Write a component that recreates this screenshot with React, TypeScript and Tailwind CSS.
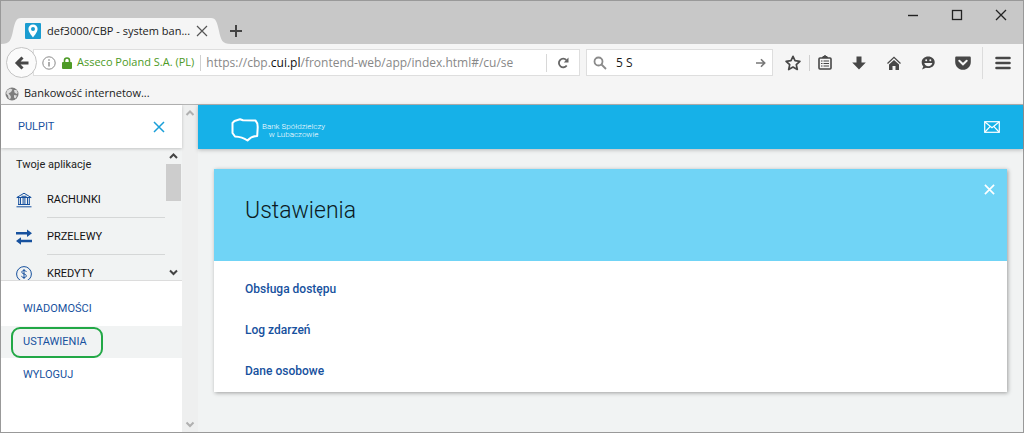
import React from 'react';

const chromeFont = "font-['Open_Sans','Noto_Sans',sans-serif]";

// --- Toolbar button ---
const ToolButton: React.FC<{ label: string; className?: string; children: React.ReactNode }> = ({ label, className = '', children }) => (
  <button aria-label={label} className={`flex h-7 shrink-0 items-center justify-center text-[#474747] ${className}`}>
    {children}
  </button>
);

// --- Scroll arrows ---
const Chevron: React.FC<{ up?: boolean; className?: string }> = ({ up, className = '' }) => (
  <svg className={`h-4 w-full shrink-0 ${className}`} viewBox="0 0 16 16" fill="none" stroke="currentColor" strokeWidth="2">
    {up ? <path d="M4.5 10 8 6.5 11.5 10" /> : <path d="M4.5 6.5 8 10l3.5-3.5" />}
  </svg>
);

const Cross: React.FC<{ className?: string; width?: number }> = ({ className = '', width = 1.5 }) => (
  <svg className={className} viewBox="0 0 12 12" fill="none" stroke="currentColor" strokeWidth={width}>
    <path d="M1 1l10 10M11 1L1 11" />
  </svg>
);

// --- Title bar with the tab ---
const TitleBar = () => (
  <div className="flex h-[43px] items-start justify-between bg-[#c8c8c8]">
    <div className="flex h-[43px] items-end">
      <svg className="h-[26px] w-5 shrink-0 text-[#f5f5f5]" viewBox="0 0 20 26" fill="currentColor">
        <path d="M0 26c9 0 10-4 12-13S15 0 20 0v26z" />
      </svg>
      <div className="flex h-[26px] w-[190px] items-center bg-[#f5f5f5] pl-1">
        <svg className="h-4 w-4 shrink-0" viewBox="0 0 16 16">
          <rect width="16" height="16" rx="1" fill="#1b9cd0" />
          <path d="M8 1.5a4.6 4.6 0 0 0-4.6 4.6C3.4 9.3 8 14.5 8 14.5s4.6-5.2 4.6-8.4A4.6 4.6 0 0 0 8 1.5z" fill="#fff" />
          <circle cx="8" cy="6" r="2" fill="#1b9cd0" />
        </svg>
        <span className="ml-[6px] flex-1 whitespace-nowrap text-[11px] text-[#1a1a1a]">def3000/CBP - system ban...</span>
        <button aria-label="Close tab" className="mr-[3px] text-[#555]">
          <Cross className="h-3 w-3" width={1.2} />
        </button>
      </div>
      <svg className="h-[26px] w-5 shrink-0 text-[#f5f5f5]" viewBox="0 0 20 26" fill="currentColor">
        <path d="M20 26c-9 0-10-4-12-13S5 0 0 0v26z" />
      </svg>
      <button aria-label="New tab" className="mb-[7px] -ml-px text-[#444]">
        <svg className="h-3 w-3" viewBox="0 0 12 12" stroke="currentColor" strokeWidth="2">
          <path d="M6 0v12M0 6h12" />
        </svg>
      </button>
    </div>
    <div className="flex h-7 items-center text-[#222]">
      <button aria-label="Minimize" className="flex w-11 justify-center">
        <svg className="h-3 w-3" viewBox="0 0 12 12" stroke="currentColor" strokeWidth="1.4"><path d="M1 6.5h10" /></svg>
      </button>
      <button aria-label="Maximize" className="flex w-11 justify-center">
        <svg className="h-3 w-3" viewBox="0 0 12 12" fill="none" stroke="currentColor" strokeWidth="1.3"><rect x="1.5" y="1.5" width="9" height="9" /></svg>
      </button>
      <button aria-label="Close window" className="flex w-11 justify-center">
        <Cross className="h-3 w-3" width={1.3} />
      </button>
    </div>
  </div>
);

// --- Navigation toolbar ---
const Toolbar = () => (
  <div className="flex h-[37px] items-center bg-[#f5f5f5] pr-1">
    <button aria-label="Back" className="z-10 ml-[5px] flex h-[31px] w-[31px] shrink-0 items-center justify-center rounded-full border border-[#c4c4c4] bg-[#fbfbfb] text-[#474747]">
      <svg className="h-4 w-4" viewBox="0 0 16 16" fill="none" stroke="currentColor" strokeWidth="3">
        <path d="M8.5 2.5 3 8l5.5 5.5M3 8h11.5" />
      </svg>
    </button>
    <div className="-ml-1 flex h-[27px] min-w-0 flex-1 items-center border border-[#dedede] bg-white pl-2">
      <svg className="h-[14px] w-[14px] shrink-0" viewBox="0 0 14 14" fill="none" stroke="#8a8a8a">
        <circle cx="7" cy="7" r="6.2" />
        <path d="M7 6v4.5M7 3.3v1.5" strokeWidth="1.4" />
      </svg>
      <svg className="ml-[6px] h-3 w-[10px] shrink-0" viewBox="0 0 10 12">
        <path d="M2.5 6V3.5a2.5 2.5 0 0 1 5 0V6" fill="none" stroke="#4d9a26" strokeWidth="1.6" />
        <rect y="5" width="10" height="7" rx="1" fill="#4d9a26" />
      </svg>
      <span className="ml-[5px] whitespace-nowrap text-[11px] text-[#4d9a26]">Asseco Poland S.A. (PL)</span>
      <span className="ml-[6px] h-4 w-px shrink-0 bg-[#d0d0d0]" />
      <div
        role="textbox"
        aria-label="Address"
        contentEditable
        suppressContentEditableWarning
        className="ml-[5px] min-w-0 flex-1 overflow-hidden whitespace-nowrap text-xs text-[#888]"
      >
        https://cbp.<span className="text-[#111]">cui.pl</span>/frontend-web/app/index.html#/cu/se
      </div>
      <span className="ml-5 h-[18px] w-px shrink-0 bg-[#d8d8d8]" />
      <button aria-label="Reload" className="flex w-8 shrink-0 justify-center text-[#666]">
        <svg className="h-3 w-3" viewBox="0 0 12 12" fill="none" stroke="currentColor" strokeWidth="1.8">
          <path d="M9.7 8.5A4.3 4.3 0 1 1 9.3 3" />
          <path d="M11.5 .5v5H6.8z" fill="currentColor" stroke="none" />
        </svg>
      </button>
    </div>
    <label className="ml-[6px] flex h-[27px] w-[187px] shrink-0 items-center border border-[#dedede] bg-white px-[6px]">
      <svg className="h-[14px] w-[14px] shrink-0" viewBox="0 0 14 14" fill="none" stroke="#8a8a8a" strokeWidth="1.8">
        <circle cx="5.5" cy="5.5" r="4" />
        <path d="M8.5 8.5l4.5 4.5" />
      </svg>
      <input aria-label="Search" defaultValue="5 S" className="ml-[9px] min-w-0 flex-1 text-xs text-[#1a1a1a] outline-none" />
      <button aria-label="Search" className="text-[#777]">
        <svg className="h-[10px] w-[10px]" viewBox="0 0 10 10" fill="none" stroke="currentColor" strokeWidth="1.6">
          <path d="M0 5h8.5M5 1.3 8.7 5 5 8.7" />
        </svg>
      </button>
    </label>
    <ToolButton label="Bookmark" className="ml-1 w-8">
      <svg className="h-4 w-4" viewBox="0 0 16 16" fill="none" stroke="currentColor" strokeWidth="1.7" strokeLinejoin="round">
        <path d="M8 1.3l2 4.4 4.9 .6-3.6 3.3 1 4.9L8 12l-4.3 2.5 1-4.9L1.1 6.3 6 5.7z" />
      </svg>
    </ToolButton>
    <span className="h-4 w-px shrink-0 bg-[#d0d0d0]" />
    <ToolButton label="Bookmarks list" className="w-[30px]">
      <svg className="h-4 w-[14px]" viewBox="0 0 14 16" fill="none" stroke="currentColor">
        <rect x="1" y="3" width="12" height="11" rx="1" strokeWidth="1.6" />
        <path d="M4 2.5 7 .5l3 2z" fill="currentColor" />
        <path d="M3 6h1.5M3 8.5h1.5M3 11h1.5M5.5 6H11M5.5 8.5H11M5.5 11H11" strokeWidth="1.2" />
      </svg>
    </ToolButton>
    <ToolButton label="Downloads" className="w-[38px]">
      <svg className="h-[14px] w-[14px]" viewBox="0 0 14 14" fill="currentColor">
        <path d="M4.5 .5h5v6h4.3L7 13.5 .2 6.5h4.3z" />
      </svg>
    </ToolButton>
    <ToolButton label="Home" className="w-8">
      <svg className="h-[14px] w-[14px]" viewBox="0 0 14 14" fill="currentColor">
        <path d="M7 4l5 4.5V14H8.5v-4h-3v4H2V8.5z" />
        <path d="M.5 7.5 7 1.3l6.5 6.2" fill="none" stroke="currentColor" strokeWidth="1.3" />
      </svg>
    </ToolButton>
    <ToolButton label="Feedback" className="w-9">
      <svg className="h-[14px] w-[14px]" viewBox="0 0 14 14">
        <path d="M7.2 .5c3.7 0 6.5 2.5 6.5 5.8s-2.8 5.8-6.5 5.8c-.8 0-1.6-.1-2.3-.3L1 13.5l1.3-3C1.2 9.4 .7 7.9 .7 6.3 .7 3 3.5 .5 7.2 .5z" fill="currentColor" />
        <path d="M3.3 7h8c-.3 2-1.8 3.2-4 3.2S3.7 9 3.3 7z" fill="#f5f5f5" />
        <circle cx="5.2" cy="4.3" r="1" fill="#f5f5f5" />
        <circle cx="9.3" cy="4.3" r="1" fill="#f5f5f5" />
      </svg>
    </ToolButton>
    <ToolButton label="Pocket" className="w-[34px]">
      <svg className="h-[14px] w-4" viewBox="0 0 16 14">
        <path d="M1.5 .5h13c.8 0 1.3 .5 1.3 1.3V6c0 4.5-3.5 7.8-7.8 7.8S.2 10.5 .2 6V1.8C.2 1 .7 .5 1.5 .5z" fill="currentColor" />
        <path d="M4.3 4.8 8 8.3l3.7-3.5" fill="none" stroke="#f5f5f5" strokeWidth="2" strokeLinecap="round" />
      </svg>
    </ToolButton>
    <span className="ml-[2px] h-8 w-px shrink-0 bg-[#dcdcdc]" />
    <ToolButton label="Menu" className="ml-1 w-8">
      <svg className="h-[14px] w-4" viewBox="0 0 16 14" stroke="currentColor" strokeWidth="2.6" strokeLinecap="round">
        <path d="M1.5 2h13M1.5 7h13M1.5 12h13" />
      </svg>
    </ToolButton>
  </div>
);

const BookmarksBar = () => (
  <div className="flex h-6 items-center border-b border-[#b4b4b4] bg-[#f5f5f5] pt-[2px] pl-1">
    <a href="#" className="flex items-center gap-[5px] text-[11px] text-[#1a1a1a]">
      <svg className="h-[14px] w-[14px]" viewBox="0 0 14 14">
        <circle cx="7" cy="7" r="6.5" fill="#7d7d7d" />
        <path d="M2 3.5 5 1.5l2.5 1L6 5 3.5 6.5 5 8l1 2-1 2.5L3.5 11 3 8.5 1.2 6.5zM9 3h2.5L12.8 6l-1.3 1L9.5 5.5zM9 8l3 .5-1.5 3L9 10.5z" fill="#dcdcdc" />
      </svg>
      Bankowość internetow...
    </a>
  </div>
);

// --- Sidebar ---
const apps = [
  {
    label: 'RACHUNKI',
    icon: (
      <svg className="h-4 w-4" viewBox="0 0 16 16" fill="none" stroke="currentColor">
        <path d="M.8 5.5 8 1.2l7.2 4.3zM5.5 4.3h5M2 12.5h12M.5 14.8h15" />
        <path d="M2.7 5.5v7M4.5 5.5v7M7.1 5.5v7M8.9 5.5v7M11.5 5.5v7M13.3 5.5v7" />
      </svg>
    ),
  },
  {
    label: 'PRZELEWY',
    icon: (
      <svg className="h-4 w-4" viewBox="0 0 16 16" fill="currentColor">
        <path d="M0 3h11V.5L16 4.300l-5 3.800V5.500H0zM16 10.700H5V8.200L0 12l5 3.800v-2.600h11z" />
      </svg>
    ),
  },
  {
    label: 'KREDYTY',
    icon: (
      <svg className="h-4 w-4" viewBox="0 0 16 16" fill="none" stroke="currentColor">
        <circle cx="8" cy="8" r="7.4" />
        <path d="M10.3 6c-.2-1-1-1.5-2.3-1.5S5.800 5.100 5.800 6.200C5.800 8.500 10.300 7.300 10.300 9.800c0 1.100-.9 1.700-2.300 1.700s-2.300-.6-2.500-1.600M8 3v10" />
      </svg>
    ),
  },
];

const Sidebar = () => (
  <aside className="flex w-[181px] shrink-0 flex-col bg-white">
    <div className="z-10 flex h-[43px] items-center justify-between px-[17px] text-[#17519e] shadow-[0_1px_3px_rgba(0,0,0,0.2)]">
      <a href="#" className="pt-[2px] text-[11px]">PULPIT</a>
      <button aria-label="Close menu" className="text-[#1a9fd8]">
        <Cross className="h-3 w-3" width={1.5} />
      </button>
    </div>
    <div className="flex h-[133px] border-b border-[#dcdcdc] bg-[#f1f3f3]">
      <div className="flex-1 overflow-hidden">
        <h2 className="flex h-[33px] items-center pt-[2px] pl-[15px] text-[11px] text-[#222]">Twoje aplikacje</h2>
        <ul>
          {apps.map(({ label, icon }) => (
            <li key={label}>
              <a href="#" className="flex items-center pl-[15px] text-[11px] text-[#111]">
                <span className="w-[31px] text-[#17519e]">{icon}</span>
                <span className="flex h-[37px] flex-1 items-center border-b border-[#d5d7d7] pt-[2px]">{label}</span>
              </a>
            </li>
          ))}
        </ul>
      </div>
      <div className="flex w-[17px] shrink-0 flex-col justify-between text-[#444]">
        <div>
          <Chevron up />
          <div className="mx-px h-[37px] bg-[#cdcdcd]" />
        </div>
        <Chevron />
      </div>
    </div>
    <nav className="flex flex-col gap-px pt-3 text-[11px] text-[#17519e]">
      <a href="#" className="flex h-8 items-center pl-[22px]">WIADOMOŚCI</a>
      <a href="#" className="flex h-8 items-center bg-[#f1f3f3] pl-[10px]">
        <span className="flex h-[31px] w-[92px] items-center rounded-[9px] border-2 border-[#22a846] pl-[10px]">USTAWIENIA</span>
      </a>
      <a href="#" className="flex h-8 items-center pl-[22px]">WYLOGUJ</a>
    </nav>
  </aside>
);

const links = ['Obsługa dostępu', 'Log zdarzeń', 'Dane osobowe'];

// --- Page content ---
const Content = () => (
  <main className="min-w-0 flex-1 bg-[#f1f3f3]">
    <header className="flex h-[44px] items-center justify-between bg-[#16b1e8] pl-[33px] pr-[23px] text-white shadow-[0_1px_4px_rgba(0,0,0,0.25)]">
      <div className="flex items-center gap-[3px] pt-[5px]">
        <svg className="h-6 w-7" viewBox="0 0 28 24" fill="none" stroke="currentColor" strokeWidth="2" strokeLinejoin="round">
          <path d="M3.5 3 9 1.2l3 1 12.5 .3c1.500 1.500 2.300 4 2.200 7l-.5 8.500c-3.500 .2-7 1.500-9.700 4.500-4-2.800-8-3.800-12.500-4L1.500 15V5z" />
        </svg>
        <div className="pt-[2px] text-center text-[8px] leading-[8px] font-light">
          Bank Spółdzielczy
          <br />w Lubaczowie
        </div>
      </div>
      <button aria-label="Messages">
        <svg className="h-3 w-4" viewBox="0 0 16 12" fill="none" stroke="currentColor" strokeWidth="1.2">
          <rect x=".7" y=".7" width="14.6" height="10.6" />
          <path d="M1 1l7 5.8L15 1M1 11l5-5.3M15 11l-5-5.3" />
        </svg>
      </button>
    </header>
    <section className="mx-4 mt-5 mb-10 bg-white shadow-[1px_1px_4px_rgba(0,0,0,0.35)]">
      <div className="flex h-[92px] items-start justify-between bg-[#70d4f6] pr-3 pl-[31px]">
        <h1 className="self-center pb-2 text-[23px] font-light text-[#0c1a22]">Ustawienia</h1>
        <button aria-label="Close" className="mt-[15px] text-white">
          <Cross className="h-[11px] w-[11px]" width={1.8} />
        </button>
      </div>
      <ul className="pt-[7px] pb-px text-xs font-medium text-[#17519e]">
        {links.map((link) => (
          <li key={link} className="flex h-[41px] items-center pl-[31px]">
            <a href="#">{link}</a>
          </li>
        ))}
      </ul>
    </section>
  </main>
);

export default function App() {
  return (
    <div className="flex min-h-screen flex-col border border-[#999] bg-[#f1f3f3]">
      <div className={chromeFont}>
        <TitleBar />
        <Toolbar />
        <BookmarksBar />
      </div>
      <div className="flex flex-1 font-[Roboto,sans-serif]">
        <Sidebar />
        <div className="flex w-4 shrink-0 flex-col justify-between bg-[#eeefef] text-[#b0b0b0]">
          <Chevron up />
          <Chevron />
        </div>
        <Content />
      </div>
    </div>
  );
}
